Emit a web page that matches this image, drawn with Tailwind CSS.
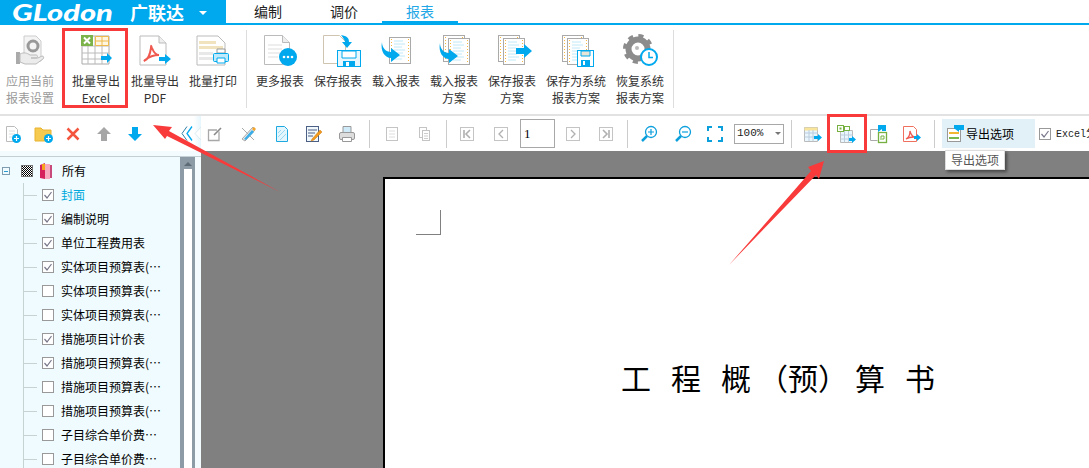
<!DOCTYPE html>
<html lang="zh">
<head>
<meta charset="utf-8">
<title>报表</title>
<script src="https://cdn.jsdelivr.net/npm/@tailwindcss/browser@4"></script>
</head>
<body class="relative w-[1089px] h-[468px] overflow-hidden bg-white text-[#333] text-xs font-['Noto_Sans_CJK_SC',sans-serif]">

<!-- shared report page icons -->
<svg class="hidden">
  <symbol id="rep" viewBox="0 0 22 27">
    <rect x="0.500" y="0.500" width="21" height="26" fill="#fff" stroke="#aaa"/>
    <path d="M2.500 2v23M19.500 2v23" stroke="#f5b942" stroke-dasharray="1 2"/>
    <path d="M5 4h9M5 7h11M5 10h8M5 13h11M5 16h9M5 19h11M5 22h8" stroke="#bfe8f8"/>
  </symbol>
</svg>

<!-- title bar -->
<header class="flex h-[25px]">
  <div class="w-[226px] h-[25px] bg-[#00a9ee] flex items-center text-white whitespace-nowrap">
    <span class="ml-[12px] w-[115px] origin-left scale-x-[1.4] font-['Lato',sans-serif] italic font-black text-[22px] leading-[25px]">GLodon</span>
    <span class="ml-[3px] font-bold text-[18px] leading-[25px]">广联达</span>
    <span class="ml-[15px] w-0 h-0 border-x-[4px] border-x-transparent border-t-[4px] border-t-white"></span>
  </div>
  <nav class="flex-1 h-[25px] border-b-2 border-[#00a9ee] flex pl-[4px] text-sm text-[#222]">
    <div class="w-[76px] h-[23px] leading-[22px] text-center">编制</div>
    <div class="w-[76px] h-[23px] leading-[22px] text-center">调价</div>
    <div class="w-[76px] h-[23px] leading-[22px] text-center text-[#22a7e6] relative">报表<span class="absolute left-0 right-0 top-[21px] h-[2px] bg-[#00a9ee]"></span></div>
  </nav>
</header>

<!-- ribbon -->
<section class="flex h-[89px] pt-[8px] leading-[17px] whitespace-nowrap">
  <div class="ml-[1px] w-[58px] flex flex-col items-center text-[#9a9a9a]">
    <svg class="w-[34px] h-[34px] mb-[5px]" viewBox="0 0 34 34">
      <path d="M11 3h12l5 5v20H11z" fill="#f4f4f4" stroke="#ccc"/>
      <circle cx="20" cy="13" r="5" fill="none" stroke="#999" stroke-width="3"/>
      <path d="M3 19h4v12H3z" fill="#aaa"/>
      <path d="M7 21c4-2 7-1 10 1h6c2 0 2 3 0 3h-5 7l4-2c2 0 2 2 1 3l-7 5H12l-5-2z" fill="#ececec" stroke="#bbb"/>
    </svg>
    <span>应用当前</span><span>报表设置</span>
  </div>
  <div class="ml-[8px] w-[58px] flex flex-col items-center">
    <svg class="w-[34px] h-[34px] mb-[5px]" viewBox="0 0 34 34">
      <path d="M3 3h27v28H3z" fill="#fff" stroke="#aaa"/>
      <path d="M3 20h27M3 26h27M9 13v18M16 3v28M23 3v28M16 9h14M3 13h27" stroke="#bbb" fill="none"/>
      <path d="M16.500 3.500h13v9h-13z" fill="#fff7e2" stroke="#eeb94f"/>
      <path d="M23 4v8M17 8h12" stroke="#eeb94f"/>
      <rect x="2" y="2" width="12" height="11" fill="#7cb24a"/>
      <path d="M5 4.500l6 6M11 4.500l-6 6" stroke="#fff" stroke-width="2"/>
      <path d="M22 23h6v-3l5 5-5 5v-3h-6z" fill="#00a9ee"/>
    </svg>
    <span>批量导出</span><span>Excel</span>
  </div>
  <div class="ml-[1px] w-[58px] flex flex-col items-center">
    <svg class="w-[34px] h-[34px] mb-[5px]" viewBox="0 0 34 34">
      <path d="M2 3h19l7 7v22H2z" fill="#fff" stroke="#bbb"/>
      <path d="M21 3v7h7" fill="#eee" stroke="#bbb"/>
      <path d="M6 28c3-1 6-6 7-13 0-3 0-3 1 0 2 5 4 7 7 7-5 0-9 1-14 5z" fill="none" stroke="#ef5a50" stroke-width="2"/>
      <path d="M21 24h6v-3l6 5-6 5v-3h-6z" fill="#00a9ee"/>
    </svg>
    <span>批量导出</span><span>PDF</span>
  </div>
  <div class="w-[58px] flex flex-col items-center">
    <svg class="w-[34px] h-[34px] mb-[5px]" viewBox="0 0 34 34">
      <path d="M1 3h21l7 7v22H1z" fill="#fff" stroke="#bbb"/>
      <path d="M3 8h17v3H3zM3 13h24v3H3z" fill="#f0e3bd"/>
      <path d="M3 19h14v3H3zM3 24h14v3H3z" fill="#e8e8e8"/>
      <path d="M21 16h8v4h-8z" fill="#fff" stroke="#999"/>
      <rect x="17.500" y="20.500" width="15" height="8" rx="1" fill="#bfeafb" stroke="#00a9ee"/>
      <path d="M21 25h8v5h-8z" fill="#fff" stroke="#00a9ee"/>
    </svg>
    <span>批量打印</span>
  </div>
  <div class="ml-[4px] w-px h-[78px] bg-[#ddd] mt-[-3px]"></div>
  <div class="ml-[4px] w-[58px] flex flex-col items-center">
    <svg class="w-[34px] h-[34px] mb-[5px]" viewBox="0 0 34 34">
      <path d="M1.500 2.500h18l7 7v22h-25z" fill="#fff" stroke="#bbb"/>
      <path d="M19.500 2.500v7h7" fill="#eee" stroke="#bbb"/>
      <path d="M5 12h14M5 16h14M5 20h12M5 24h10" stroke="#ddd"/>
      <circle cx="25" cy="24" r="9" fill="#00a9ee"/>
      <circle cx="21" cy="24" r="1.300" fill="#fff"/><circle cx="25" cy="24" r="1.300" fill="#fff"/><circle cx="29" cy="24" r="1.300" fill="#fff"/>
    </svg>
    <span>更多报表</span>
  </div>
  <div class="w-[58px] flex flex-col items-center">
    <svg class="w-[34px] h-[34px] mb-[5px] overflow-visible" viewBox="0 0 34 34">
      <path d="M2.500 2.500h16l6 6v22h-22z" fill="#fff" stroke="#cfc4b0"/>
      <path d="M20 2c6 1 8 3 8 7h3l-5 6-5-6h3c0-2-2-4-4-7z" fill="#00a9ee"/>
      <rect x="16.500" y="17.500" width="23" height="16" fill="#e7f7fd" stroke="#00a9ee"/>
      <path d="M21 18h14v7H21z" fill="#fff" stroke="#00a9ee"/>
      <path d="M22 28h12v6H22z" fill="#00a9ee"/>
      <path d="M25 29h3v4h-3z" fill="#fff"/>
    </svg>
    <span>保存报表</span>
  </div>
  <div class="w-[58px] flex flex-col items-center">
    <svg class="w-[34px] h-[34px] mb-[5px]" viewBox="0 0 34 34">
      <use href="#rep" x="10" y="4" width="22" height="27"/>
      <path d="M3 9c0 6 4 10 9 10v-4l9 7-9 7v-4C6 25 1 18 3 9z" fill="#00a9ee"/>
    </svg>
    <span>载入报表</span>
  </div>
  <div class="w-[58px] flex flex-col items-center">
    <svg class="w-[34px] h-[34px] mb-[5px]" viewBox="0 0 34 34">
      <use href="#rep" x="6" y="2" width="22" height="27"/>
      <use href="#rep" x="11" y="5" width="22" height="27"/>
      <path d="M3 10c0 6 4 10 9 10v-4l9 7-9 7v-4C6 26 1 19 3 10z" fill="#00a9ee"/>
    </svg>
    <span>载入报表</span><span>方案</span>
  </div>
  <div class="w-[58px] flex flex-col items-center">
    <svg class="w-[34px] h-[34px] mb-[5px] overflow-visible" viewBox="0 0 34 34">
      <use href="#rep" x="3" y="2" width="22" height="27"/>
      <use href="#rep" x="8" y="5" width="22" height="27"/>
      <path d="M21 15h8v-4l8 7-8 7v-4h-8z" fill="#00a9ee"/>
    </svg>
    <span>保存报表</span><span>方案</span>
  </div>
  <div class="ml-[6px] w-[58px] flex flex-col items-center">
    <svg class="w-[34px] h-[34px] mb-[5px] overflow-visible" viewBox="0 0 34 34">
      <use href="#rep" x="3" y="2" width="22" height="27"/>
      <use href="#rep" x="8" y="5" width="22" height="27"/>
      <rect x="18.500" y="17.500" width="16" height="16" fill="#fff" stroke="#00a9ee"/>
      <path d="M22 18h9v5h-9z" fill="#e8e4d6" stroke="#00a9ee"/>
      <path d="M22 27h9v6h-9z" fill="#00a9ee"/>
      <path d="M24 28h2v4h-2z" fill="#fff"/>
    </svg>
    <span>保存为系统</span><span>报表方案</span>
  </div>
  <div class="ml-[6px] w-[58px] flex flex-col items-center">
    <svg class="w-[34px] h-[34px] mb-[5px] overflow-visible" viewBox="0 0 34 34">
      <circle cx="15" cy="16" r="9.500" fill="none" stroke="#8c8c8c" stroke-width="6"/>
      <circle cx="15" cy="16" r="13" fill="none" stroke="#8c8c8c" stroke-width="4" stroke-dasharray="5 5.200"/>
      <circle cx="14" cy="15" r="2" fill="#bbb"/>
      <circle cx="26" cy="24" r="8" fill="#fff" stroke="#00a9ee" stroke-width="2"/>
      <path d="M26 19v5.500h4" fill="none" stroke="#00a9ee" stroke-width="1.500"/>
    </svg>
    <span>恢复系统</span><span>报表方案</span>
  </div>
  <div class="ml-[4px] w-px h-[78px] bg-[#ddd] mt-[-3px]"></div>
</section>

<div class="h-[2px] bg-[#e2e2e2]"></div>

<!-- toolbar -->
<section class="flex items-center h-[35px] whitespace-nowrap *:shrink-0">
  <svg class="ml-[2px] w-[20px] h-[20px]" viewBox="0 0 20 20">
    <path d="M4.500 2.500h8l3 3v12h-11z" fill="#fff" stroke="#bbb"/>
    <path d="M7 7h6M7 10h6M7 13h4" stroke="#ddd"/>
    <circle cx="14.500" cy="14.500" r="4.500" fill="#00a9ee"/>
    <path d="M14.500 12v5M12 14.500h5" stroke="#fff" stroke-width="1.200"/>
  </svg>
  <svg class="ml-[12px] w-[20px] h-[20px]" viewBox="0 0 20 20">
    <path d="M1 4h6l2 2h8v11H1z" fill="#f6c94f" stroke="#e9b331"/>
    <circle cx="14.500" cy="14.500" r="4.500" fill="#00a9ee"/>
    <path d="M14.500 12v5M12 14.500h5" stroke="#fff" stroke-width="1.200"/>
  </svg>
  <svg class="ml-[9px] w-[20px] h-[20px]" viewBox="0 0 20 20">
    <path d="M4.500 4.500l11 11M15.500 4.500l-11 11" stroke="#f4553f" stroke-width="2.500"/>
  </svg>
  <svg class="ml-[11px] w-[20px] h-[20px]" viewBox="0 0 20 20">
    <path d="M10 3l7 7h-4v7H7v-7H3z" fill="#a6a6a6"/>
  </svg>
  <svg class="ml-[11px] w-[20px] h-[20px]" viewBox="0 0 20 20">
    <path d="M10 17l-7-7h4V3h6v7h4z" fill="#00a9ee"/>
  </svg>
  <!-- collapse handle of the tree panel -->
  <div class="ml-[32px] w-[24px] h-[35px] flex items-center bg-gradient-to-r from-white from-70% to-[#e6f6fc]">
    <svg class="w-[24px] h-[35px]" viewBox="0 0 24 35">
      <path d="M10 10.500l-5 7 5 7" fill="none" stroke="#2d7fa8"/>
      <path d="M15 10.500l-5 7 5 7" fill="none" stroke="#00a9ee" stroke-width="1.300"/>
      <path d="M24 11l-6 6.500 6 6.500z" fill="#fff" stroke="#dcebf0"/>
    </svg>
  </div>
  <svg class="ml-[4px] w-[20px] h-[20px]" viewBox="0 0 20 20">
    <path d="M14 7.500v9H3.500V6H12" fill="none" stroke="#a8a8a8" stroke-width="1.300"/>
    <path d="M9 11l7-7" stroke="#8a8a8a" stroke-width="1.600"/>
  </svg>
  <svg class="ml-[13px] w-[20px] h-[20px]" viewBox="0 0 20 20">
    <path d="M4 4l12 12M4 15l3 2 10-11-2-3z" fill="#e8e8e8" stroke="#a9a9a9"/>
    <path d="M6 15l8-9 2 2-8 8z" fill="#39aee8"/>
    <path d="M14 5l2-2 2 2-2 2z" fill="#f4a62a"/>
  </svg>
  <svg class="ml-[14px] w-[20px] h-[20px]" viewBox="0 0 20 20">
    <path d="M4.500 2.500h8l3 3v12h-11z" fill="#e3f5fd" stroke="#1ea8e0"/>
    <path d="M6 13l7-7M6 9l3-3M8 16l6-6" stroke="#9ad8f2"/>
  </svg>
  <svg class="ml-[11px] w-[20px] h-[20px]" viewBox="0 0 20 20">
    <rect x="3.500" y="2.500" width="12" height="15" fill="#f1f8fc" stroke="#4c5f85"/>
    <path d="M5 6h9M5 9h7M5 12h5" stroke="#4c5f85"/>
    <path d="M9 15l8-9 2 2-8 8-3 1z" fill="#f39a1e" stroke="#c9780c" stroke-width="0.500"/>
  </svg>
  <svg class="ml-[14px] w-[20px] h-[20px]" viewBox="0 0 20 20">
    <path d="M6 2.500h8v6H6z" fill="#cfeaf8" stroke="#999"/>
    <rect x="2.500" y="8.500" width="15" height="7" rx="1.500" fill="#ddd" stroke="#999"/>
    <path d="M5.500 13.500h9v4h-9z" fill="#fff" stroke="#999"/>
  </svg>
  <div class="ml-[12px] w-px h-[28px] bg-[#ccc]"></div>
  <svg class="ml-[12px] w-[20px] h-[20px]" viewBox="0 0 20 20">
    <rect x="4.500" y="3.500" width="11" height="13" fill="#fff" stroke="#c4c4c4"/>
    <path d="M7 7h6M7 10h6M7 13h6" stroke="#ddd"/>
  </svg>
  <svg class="ml-[12px] w-[20px] h-[20px]" viewBox="0 0 20 20">
    <rect x="5.500" y="3.500" width="7" height="10" fill="#fff" stroke="#c4c4c4"/>
    <rect x="8.500" y="6.500" width="7" height="10" fill="#fff" stroke="#c4c4c4"/>
    <path d="M10 9.500h4M10 12h4M10 14.500h4" stroke="#ccc"/>
  </svg>
  <div class="ml-[12px] w-px h-[28px] bg-[#ccc]"></div>
  <svg class="ml-[10px] w-[20px] h-[20px]" viewBox="0 0 20 20">
    <rect x="3.500" y="3.500" width="13" height="13" fill="#fff" stroke="#c4c4c4"/>
    <path d="M7 6v8M13 6l-4 4 4 4" fill="none" stroke="#b0b0b0" stroke-width="1.600"/>
  </svg>
  <svg class="ml-[14px] w-[20px] h-[20px]" viewBox="0 0 20 20">
    <rect x="3.500" y="3.500" width="13" height="13" fill="#fff" stroke="#c4c4c4"/>
    <path d="M12 6l-4 4 4 4" fill="none" stroke="#b0b0b0" stroke-width="1.300"/>
  </svg>
  <div class="ml-[9px] w-[35px] h-[29px] border border-[#a8a8a8] bg-white pl-[3px] leading-[27px] font-['Liberation_Serif',serif] text-[13px] text-black">1</div>
  <svg class="ml-[8px] w-[20px] h-[20px]" viewBox="0 0 20 20">
    <rect x="3.500" y="3.500" width="13" height="13" fill="#fff" stroke="#c4c4c4"/>
    <path d="M8 6l4 4-4 4" fill="none" stroke="#b0b0b0" stroke-width="1.300"/>
  </svg>
  <svg class="ml-[13px] w-[20px] h-[20px]" viewBox="0 0 20 20">
    <rect x="3.500" y="3.500" width="13" height="13" fill="#fff" stroke="#c4c4c4"/>
    <path d="M13 6v8M7 6l4 4-4 4" fill="none" stroke="#b0b0b0" stroke-width="1.600"/>
  </svg>
  <div class="ml-[11px] w-px h-[28px] bg-[#ccc]"></div>
  <svg class="ml-[11px] w-[20px] h-[20px]" viewBox="0 0 20 20">
    <circle cx="12" cy="8" r="5.500" fill="#fff" stroke="#0b9fdc" stroke-width="1.300"/>
    <path d="M8 12l-5 5" stroke="#0b9fdc" stroke-width="2.500"/>
    <path d="M12 5v6M9 8h6" stroke="#0b9fdc" stroke-width="1.200"/>
  </svg>
  <svg class="ml-[14px] w-[20px] h-[20px]" viewBox="0 0 20 20">
    <circle cx="12" cy="8" r="5.500" fill="#fff" stroke="#0b9fdc" stroke-width="1.300"/>
    <path d="M8 12l-5 5" stroke="#0b9fdc" stroke-width="2.500"/>
    <path d="M9 8h6" stroke="#0b9fdc" stroke-width="1.200"/>
  </svg>
  <svg class="ml-[12px] w-[20px] h-[20px]" viewBox="0 0 20 20">
    <path d="M3 7V3h4M13 3h4v4M17 13v4h-4M7 17H3v-4" fill="none" stroke="#0b9fdc" stroke-width="2"/>
  </svg>
  <div class="ml-[9px] w-[50px] h-[20px] border border-[#a8a8a8] flex items-center pl-[2px] font-['Liberation_Mono',monospace] text-[11px] text-[#222]">100%<span class="ml-[12px] w-0 h-0 border-x-[3px] border-x-transparent border-t-[3px] border-t-[#777]"></span></div>
  <div class="ml-[7px] w-px h-[28px] bg-[#ccc]"></div>
  <svg class="ml-[11px] w-[20px] h-[20px]" viewBox="0 0 20 20">
    <path d="M1.500 3.500h13v14h-13z" fill="#eaf6fd" stroke="#bbb"/>
    <path d="M1.500 3.500h13v3h-13z" fill="#f8e49a"/>
    <path d="M1.500 9h13M1.500 13h13M6 6v11M10 6v11" stroke="#bcd"/>
    <path d="M11 12h4v-2l4 3.500-4 3.500v-2h-4z" fill="#00a9ee"/>
  </svg>
  <svg class="ml-[14px] w-[20px] h-[20px]" viewBox="0 0 20 20">
    <path d="M3.500 6.500h12v12h-12z" fill="#eaf6fd" stroke="#bbb"/>
    <path d="M3.500 11h12M3.500 15h12M7.500 7v11M11.500 7v11" stroke="#bcd"/>
    <rect x="0.500" y="1.500" width="6" height="6" fill="#fff" stroke="#76b041"/>
    <rect x="2.500" y="3.500" width="2" height="2" fill="#76b041"/>
    <rect x="7.500" y="2.500" width="5" height="4" fill="#fff" stroke="#76b041"/>
    <path d="M12 14h3v-2l4 3.500-4 3.500v-2h-3z" fill="#00a9ee"/>
  </svg>
  <svg class="ml-[12px] w-[20px] h-[20px]" viewBox="0 0 20 20">
    <path d="M1.500 5.500h8M1.500 5.500v11h7" fill="none" stroke="#aaa"/>
    <path d="M9 1h8v6h-4V5l-4 3z" fill="#00a9ee"/>
    <rect x="9.500" y="8.500" width="8" height="10" fill="#fff" stroke="#76b041" stroke-width="1.300"/>
    <path d="M12 16v-4h3v3h-2" fill="none" stroke="#76b041"/>
  </svg>
  <svg class="ml-[13px] w-[20px] h-[20px]" viewBox="0 0 20 20">
    <path d="M1.500 2.500h10l3 3v12h-13z" fill="#fff" stroke="#f0705f"/>
    <path d="M4 15c2-1 4-4 4-8 1 4 2 5 4 6-3 0-5 0-8 2z" fill="none" stroke="#ef5a50" stroke-width="1.300"/>
    <path d="M12 12h3v-2l4 3.500-4 3.500v-2h-3z" fill="#00a9ee"/>
  </svg>
  <div class="ml-[12px] w-px h-[28px] bg-[#ccc]"></div>
  <div class="ml-[7px] w-[93px] h-[29px] bg-[#e1f1f7] flex items-center pl-[4px] text-black">
    <svg class="w-[20px] h-[20px] shrink-0" viewBox="0 0 20 20">
      <rect x="1.500" y="4.500" width="13" height="13" fill="#fff" stroke="#999"/>
      <path d="M3 9h10" stroke="#f2b632" stroke-width="2"/>
      <path d="M3 13h10v2H3z" fill="#78b84c"/>
      <path d="M8 1h10v5h-5v2l-4-3H8z" fill="#00a9ee"/>
    </svg>
    <span class="text-[12px]">导出选项</span>
  </div>
  <svg class="ml-[4px] w-[12px] h-[12px]" viewBox="0 0 12 12">
    <rect x="0.500" y="0.500" width="11" height="11" fill="#fff" stroke="#999"/>
    <path d="M2.500 6l2.500 3 4.500-6" fill="none" stroke="#77778a" stroke-width="1.200"/>
  </svg>
  <span class="ml-[5px] font-['Liberation_Mono','Noto_Sans_CJK_SC',monospace] text-[10px] text-[#222]">Excel<span class="text-[12px]">分页</span></span>
</section>

<!-- main area -->
<main class="flex h-[317px] bg-[#808080]">
  <div class="w-[201px] bg-[#f3fbfe] pt-[5px] shrink-0">
    <div class="flex h-full border-t border-[#c2d0d6]">
      <!-- report tree -->
      <div class="w-[180px] h-full bg-[#effbfe] pt-[2px] overflow-hidden text-black whitespace-nowrap">
        <div class="flex items-center h-[24px]">
          <span class="ml-[2px] w-[8px] h-[8px] border border-[#7f9db0] flex items-center justify-center"><span class="w-[4px] h-px bg-[#2a9ad0]"></span></span>
          <svg class="ml-[11px] w-[12px] h-[12px]" viewBox="0 0 12 12">
            <defs><pattern id="chk" width="2" height="2" patternUnits="userSpaceOnUse"><rect width="1" height="1"/><rect x="1" y="1" width="1" height="1"/></pattern></defs>
            <rect width="12" height="12" fill="#fff"/><rect width="12" height="12" fill="url(#chk)"/>
            <rect x="0.500" y="0.500" width="11" height="11" fill="none" stroke="#777"/>
          </svg>
          <svg class="ml-[6px] w-[14px] h-[17px]" viewBox="0 0 14 17">
            <path d="M1 2l5-2v16l-5-1z" fill="#d61f5d"/>
            <path d="M6 1h5v15H6z" fill="#f7a9c0"/>
            <path d="M11 2h2v13h-2z" fill="#c74a7a"/>
            <path d="M3 1h3v6H3z" fill="#f6a21e"/>
          </svg>
          <span class="ml-[9px]">所有</span>
        </div>
        <div class="ml-[23px] border-l border-[#c5d3d3]">
          <div class="flex items-center h-[24px]"><span class="w-[13px] h-px bg-[#c5d3d3]"></span><svg class="ml-[5px] w-[12px] h-[12px]" viewBox="0 0 12 12"><rect x="0.500" y="0.500" width="11" height="11" fill="#fff" stroke="#999"/><path d="M2.500 6l2.500 3 4.500-6" fill="none" stroke="#77778a" stroke-width="1.200"/></svg><span class="ml-[7px] text-[#00a9dc]">封面</span></div>
          <div class="flex items-center h-[24px]"><span class="w-[13px] h-px bg-[#c5d3d3]"></span><svg class="ml-[5px] w-[12px] h-[12px]" viewBox="0 0 12 12"><rect x="0.500" y="0.500" width="11" height="11" fill="#fff" stroke="#999"/><path d="M2.500 6l2.500 3 4.500-6" fill="none" stroke="#77778a" stroke-width="1.200"/></svg><span class="ml-[7px]">编制说明</span></div>
          <div class="flex items-center h-[24px]"><span class="w-[13px] h-px bg-[#c5d3d3]"></span><svg class="ml-[5px] w-[12px] h-[12px]" viewBox="0 0 12 12"><rect x="0.500" y="0.500" width="11" height="11" fill="#fff" stroke="#999"/><path d="M2.500 6l2.500 3 4.500-6" fill="none" stroke="#77778a" stroke-width="1.200"/></svg><span class="ml-[7px]">单位工程费用表</span></div>
          <div class="flex items-center h-[24px]"><span class="w-[13px] h-px bg-[#c5d3d3]"></span><svg class="ml-[5px] w-[12px] h-[12px]" viewBox="0 0 12 12"><rect x="0.500" y="0.500" width="11" height="11" fill="#fff" stroke="#999"/><path d="M2.500 6l2.500 3 4.500-6" fill="none" stroke="#77778a" stroke-width="1.200"/></svg><span class="ml-[7px]">实体项目预算表(⋯</span></div>
          <div class="flex items-center h-[24px]"><span class="w-[13px] h-px bg-[#c5d3d3]"></span><span class="ml-[5px] w-[12px] h-[12px] bg-white border border-[#999]"></span><span class="ml-[7px]">实体项目预算表(⋯</span></div>
          <div class="flex items-center h-[24px]"><span class="w-[13px] h-px bg-[#c5d3d3]"></span><span class="ml-[5px] w-[12px] h-[12px] bg-white border border-[#999]"></span><span class="ml-[7px]">实体项目预算表(⋯</span></div>
          <div class="flex items-center h-[24px]"><span class="w-[13px] h-px bg-[#c5d3d3]"></span><svg class="ml-[5px] w-[12px] h-[12px]" viewBox="0 0 12 12"><rect x="0.500" y="0.500" width="11" height="11" fill="#fff" stroke="#999"/><path d="M2.500 6l2.500 3 4.500-6" fill="none" stroke="#77778a" stroke-width="1.200"/></svg><span class="ml-[7px]">措施项目计价表</span></div>
          <div class="flex items-center h-[24px]"><span class="w-[13px] h-px bg-[#c5d3d3]"></span><svg class="ml-[5px] w-[12px] h-[12px]" viewBox="0 0 12 12"><rect x="0.500" y="0.500" width="11" height="11" fill="#fff" stroke="#999"/><path d="M2.500 6l2.500 3 4.500-6" fill="none" stroke="#77778a" stroke-width="1.200"/></svg><span class="ml-[7px]">措施项目预算表(⋯</span></div>
          <div class="flex items-center h-[24px]"><span class="w-[13px] h-px bg-[#c5d3d3]"></span><span class="ml-[5px] w-[12px] h-[12px] bg-white border border-[#999]"></span><span class="ml-[7px]">措施项目预算表(⋯</span></div>
          <div class="flex items-center h-[24px]"><span class="w-[13px] h-px bg-[#c5d3d3]"></span><span class="ml-[5px] w-[12px] h-[12px] bg-white border border-[#999]"></span><span class="ml-[7px]">措施项目预算表(⋯</span></div>
          <div class="flex items-center h-[24px]"><span class="w-[13px] h-px bg-[#c5d3d3]"></span><span class="ml-[5px] w-[12px] h-[12px] bg-white border border-[#999]"></span><span class="ml-[7px]">子目综合单价费⋯</span></div>
          <div class="flex items-center h-[24px]"><span class="w-[13px] h-px bg-[#c5d3d3]"></span><span class="ml-[5px] w-[12px] h-[12px] bg-white border border-[#999]"></span><span class="ml-[7px]">子目综合单价费⋯</span></div>
        </div>
      </div>
      <!-- tree scrollbar -->
      <div class="w-[15px] h-full bg-[#8d9ba6] flex flex-col items-center pt-[5px]">
        <span class="w-0 h-0 border-x-[4px] border-x-transparent border-b-[4px] border-b-[#5d6b76]"></span>
        <span class="mt-[3px] w-[8px] flex-1 bg-white"></span>
      </div>
      <div class="flex-1 bg-[#f3fbfe]"></div>
    </div>
  </div>
  <!-- report preview -->
  <div class="flex-1 pt-[26px] pl-[182px] overflow-hidden">
    <div class="w-[800px] h-[400px] bg-white border-l-2 border-t-2 border-black">
      <div class="ml-[31px] mt-[31px] w-[25px] h-[25px] border-r border-b border-[#808080]"></div>
      <div class="ml-[236px] mt-[124px] flex text-[30px] leading-[36px] text-black whitespace-nowrap">
        <span>工</span><span class="ml-[20px]">程</span><span class="ml-[20px]">概</span><span class="ml-[7px]">（预）</span><span class="ml-[7px]">算</span><span class="ml-[20px]">书</span>
      </div>
    </div>
  </div>
</main>

<!-- tooltip -->
<div class="absolute left-[945px] top-[150px] w-[60px] h-[20px] bg-white border border-[#ddd] shadow-[2px_2px_3px_rgba(0,0,0,0.45)] text-center leading-[18px] text-[#555]">导出选项</div>

<!-- red annotations -->
<div class="absolute left-[62px] top-[28px] w-[66px] h-[80px] border-[3px] border-[#f93a3a]"></div>
<div class="absolute left-[827px] top-[114px] w-[40px] h-[39px] border-[3px] border-[#f93a3a]"></div>
<svg class="absolute left-0 top-0 w-[1089px] h-[468px] pointer-events-none" viewBox="0 0 1089 468">
  <polygon points="153,125 172,127 169,131 280,192 167,136 165,139" fill="#f93a3a"/>
  <polygon points="824,161 819,179 816,175 729,265 811,171 808,167" fill="#f93a3a"/>
</svg>

</body>
</html>
